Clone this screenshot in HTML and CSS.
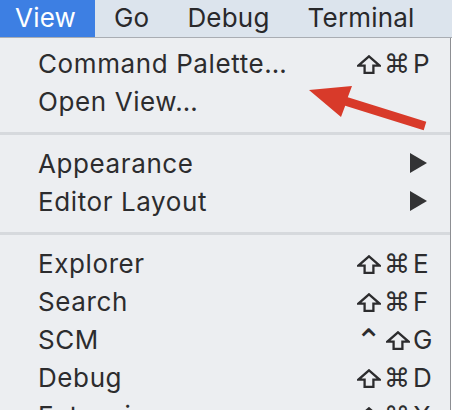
FILE: index.html
```html
<!DOCTYPE html>
<html>
<head>
<meta charset="utf-8">
<link rel="stylesheet" href="styles.css">
</head>
<body>
<div class="screen">
  <div class="menubar">
    <span class="mb-item active">View</span>
    <span class="mb-item">Go</span>
    <span class="mb-item">Debug</span>
    <span class="mb-item">Terminal</span>
  </div>
  <div class="menu">
    <div class="row"><span class="label">Command Palette…</span><span class="mods"><svg class="shift" viewBox="0 0 24 19"><polygon points="12,1.3 22.6,10.6 16.4,10.6 16.4,17.9 7.6,17.9 7.6,10.6 1.4,10.6"/></svg><span class="cmd">⌘</span></span><span class="key">P</span></div>
    <div class="row"><span class="label">Open View…</span></div>
    <div class="sep"></div>
    <div class="row"><span class="label">Appearance</span><span class="sub"></span></div>
    <div class="row"><span class="label">Editor Layout</span><span class="sub"></span></div>
    <div class="sep"></div>
    <div class="row"><span class="label">Explorer</span><span class="mods"><svg class="shift" viewBox="0 0 24 19"><polygon points="12,1.3 22.6,10.6 16.4,10.6 16.4,17.9 7.6,17.9 7.6,10.6 1.4,10.6"/></svg><span class="cmd">⌘</span></span><span class="key">E</span></div>
    <div class="row"><span class="label">Search</span><span class="mods"><svg class="shift" viewBox="0 0 24 19"><polygon points="12,1.3 22.6,10.6 16.4,10.6 16.4,17.9 7.6,17.9 7.6,10.6 1.4,10.6"/></svg><span class="cmd">⌘</span></span><span class="key">F</span></div>
    <div class="row"><span class="label">SCM</span><span class="mods"><span class="ctrl">⌃</span><svg class="shift" viewBox="0 0 24 19"><polygon points="12,1.3 22.6,10.6 16.4,10.6 16.4,17.9 7.6,17.9 7.6,10.6 1.4,10.6"/></svg></span><span class="key">G</span></div>
    <div class="row"><span class="label">Debug</span><span class="mods"><svg class="shift" viewBox="0 0 24 19"><polygon points="12,1.3 22.6,10.6 16.4,10.6 16.4,17.9 7.6,17.9 7.6,10.6 1.4,10.6"/></svg><span class="cmd">⌘</span></span><span class="key">D</span></div>
    <div class="row"><span class="label">Extensions</span><span class="mods"><svg class="shift" viewBox="0 0 24 19"><polygon points="12,1.3 22.6,10.6 16.4,10.6 16.4,17.9 7.6,17.9 7.6,10.6 1.4,10.6"/></svg><span class="cmd">⌘</span></span><span class="key">X</span></div>
  </div>
  <svg class="arrow" width="452" height="410" viewBox="0 0 452 410">
    <polygon points="309,90 352,86 347.8,97.2 426.3,121.7 423.7,130.3 345.2,105.8 341,117" fill="#d83a2a"/>
  </svg>
</div>
</body>
</html>
```
FILE: styles.css
```css
html, body {
  margin: 0;
  padding: 0;
  background: #ffffff;
}
.screen {
  position: relative;
  width: 452px;
  height: 410px;
  overflow: hidden;
  font-family: Inter, "Liberation Sans", "DejaVu Sans", sans-serif;
  font-size: 26px;
  letter-spacing: 0.6px;
  color: #2c2c2e;
}
.menubar {
  display: flex;
  height: 38px;
  background: #dce4ed;
  border-bottom: 1px solid #a9adb3;
  box-sizing: border-box;
  letter-spacing: 0.2px;
}
.mb-item {
  padding: 0 19px;
  line-height: 36px;
  color: #29292b;
}
.mb-item.active {
  background: #3d7fe3;
  color: #ffffff;
  padding: 0 19px 0 15px;
}
.menu {
  width: 450px;
  border-right: 1px solid #8d8f93;
  background: #eceef1;
  padding-top: 7px;
  height: 372px;
}
.row {
  display: flex;
  align-items: center;
  height: 38px;
  line-height: 38px;
  padding: 0 15px 0 38px;
}
.label {
  flex: 1;
}
.mods {
  display: flex;
  align-items: center;
  gap: 3px;
  letter-spacing: 0;
}
.shift {
  display: block;
  width: 24px;
  height: 19px;
  margin-top: 1px;
}
.shift polygon {
  fill: none;
  stroke: #2c2c2e;
  stroke-width: 2.3;
  stroke-linejoin: miter;
}
.cmd {
  font-family: "DejaVu Sans", sans-serif;
  font-size: 26px;
}
.ctrl {
  font-family: "DejaVu Sans", sans-serif;
  font-size: 32px;
  margin-right: 1px;
  margin-top: 2px;
}
.key {
  width: 22px;
  margin-left: 3px;
}
.sub {
  width: 0;
  height: 0;
  border-top: 10px solid transparent;
  border-bottom: 10px solid transparent;
  border-left: 17px solid #333335;
  margin-right: 8px;
  margin-top: -3px;
}
.sep {
  height: 3px;
  background: #d6d9dd;
  margin: 10.5px 0;
}
.arrow {
  position: absolute;
  left: 0;
  top: 0;
}
```
